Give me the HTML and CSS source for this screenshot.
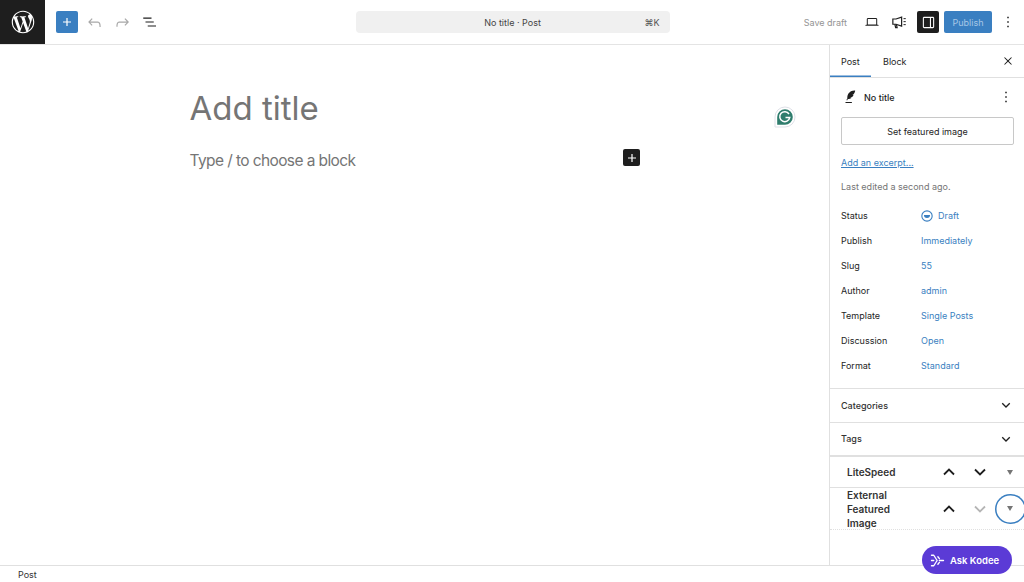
FILE: index.html
```html
<!DOCTYPE html>
<html lang="en">
<head>
<meta charset="utf-8">
<title>Add New Post</title>
<link rel="stylesheet" href="styles.css">
</head>
<body>
<div class="app">
  <header class="topbar">
    <div class="wp-logo">
      <svg width="26" height="26" viewBox="0 0 24 24" fill="#fff"><path d="M12 1.6C6.26 1.6 1.6 6.26 1.6 12S6.26 22.4 12 22.4 22.4 17.74 22.4 12 17.74 1.6 12 1.6zM2.65 12c0-1.36.29-2.64.81-3.8l4.46 12.22A9.35 9.35 0 0 1 2.65 12zm9.35 9.35c-.92 0-1.8-.13-2.64-.38l2.8-8.14 2.87 7.86.07.13c-.97.34-2 .53-3.1.53zm1.29-13.73c.56-.03 1.07-.09 1.07-.09.5-.06.44-.8-.06-.77 0 0-1.51.12-2.49.12-.92 0-2.46-.12-2.46-.12-.5-.03-.56.74-.06.77 0 0 .48.06.98.09l1.45 3.98-2.04 6.12-3.4-10.1c.56-.03 1.07-.09 1.07-.09.5-.06.44-.8-.06-.77 0 0-1.51.12-2.49.12l-.6-.01A9.34 9.34 0 0 1 12 2.65c2.44 0 4.66.93 6.33 2.46h-.12c-.92 0-1.57.8-1.57 1.66 0 .77.44 1.42.92 2.19.36.62.77 1.42.77 2.58 0 .8-.31 1.73-.71 3.03l-.94 3.13-3.39-10.08zm3.42 12.47 2.86-8.27c.53-1.34.71-2.41.71-3.36 0-.35-.02-.67-.07-.97A9.32 9.32 0 0 1 21.35 12a9.34 9.34 0 0 1-4.64 8.09z"/></svg>
    </div>
    <div class="tools">
      <button class="inserter"><svg width="14" height="14" viewBox="0 0 14 14"><path d="M7 3v8M3 7h8" stroke="#fff" stroke-width="1.2"/></svg></button>
      <svg class="tool-icon" width="19" height="19" viewBox="0 0 24 24" fill="#a8a8a8"><path d="M18.3 11.7c-.6-.6-1.4-.9-2.3-.9H6.7l2.9-3.3-1.1-1-4.5 5L8.5 16l1-1-2.7-2.7H16c.5 0 .9.2 1.3.5 1 1 1 3.4 1 4.5v.3h1.5v-.2c0-1.5 0-4.3-1.5-5.7z"/></svg>
      <svg class="tool-icon" width="19" height="19" viewBox="0 0 24 24" fill="#a8a8a8"><path d="M15.6 6.5l-1.1 1 2.9 3.3H8c-.9 0-1.7.3-2.3.9-1.4 1.5-1.4 4.2-1.4 5.6v.2h1.5v-.3c0-1.1 0-3.5 1-4.5.3-.3.7-.5 1.3-.5h9.2L14.500 15l1.100 1.100 4.600-4.600-4.600-5z"/></svg>
      <svg class="tool-icon" width="18" height="18" viewBox="0 0 24 24" fill="#1e1e1e"><path d="M3 6h11v1.500H3zM6 11.250h11v1.500H6zM9 16.500h11V18H9z"/></svg>
    </div>
    <div class="center">
      <div class="command">
        <span class="command-title">No title · Post</span>
        <span class="command-key">⌘K</span>
      </div>
    </div>
    <div class="actions">
      <span class="save">Save draft</span>
      <svg class="act-icon" width="16" height="18" viewBox="0 0 24 24" fill="#1e1e1e"><path d="M20.5 16h-.7V8c0-1.100-.9-2-2-2H6.200c-1.100 0-2 .9-2 2v8h-.7c-.8 0-1.500.7-1.500 1.500h20c0-.8-.7-1.500-1.500-1.500zM5.700 8c0-.3.2-.5.5-.5h11.600c.3 0 .5.2.5.5v7.600H5.700V8z"/></svg>
      <svg class="act-mega" width="18" height="18" viewBox="0 0 24 24" fill="none" stroke="#1e1e1e" stroke-width="1.600"><path d="M15.500 5.500v12L8 15H3.800V8H8z"/><path d="M6.500 15l1 4.500h2l-.8-3.700"/><path d="M18 7.500h3M18 11.500h3M18 15.500h3" stroke-width="1.300"/></svg>
      <button class="panel-toggle"><svg width="17" height="17" viewBox="0 0 24 24" fill="#fff"><path d="M18 4H6c-1.100 0-2 .9-2 2v12c0 1.100.9 2 2 2h12c1.100 0 2-.9 2-2V6c0-1.100-.9-2-2-2zM5.500 18V6c0-.3.2-.5.5-.5h8v13H6c-.3 0-.5-.2-.5-.5zm13 0c0 .3-.2.5-.5.5h-2.500v-13H18c.3 0 .5.2.5.5v12z"/></svg></button>
      <button class="publish">Publish</button>
      <svg class="more" width="18" height="18" viewBox="0 0 24 24" fill="#1e1e1e"><path d="M13 19h-2v-2h2v2zm0-6h-2v-2h2v2zm0-6h-2V5h2v2z"/></svg>
    </div>
  </header>

  <div class="workspace">
    <main class="editor">
      <div class="canvas">
        <h1 class="post-title">Add title</h1>
        <p class="placeholder">Type / to choose a block</p>
      </div>
      <button class="block-add"><svg width="14" height="14" viewBox="0 0 14 14"><path d="M7 3v8M3 7h8" stroke="#fff" stroke-width="1.200"/></svg></button>
      <svg class="grammarly" width="22" height="22" viewBox="0 0 22 22"><path d="M11 1a10 10 0 0 1 0 20H1V11A10 10 0 0 1 11 1z" fill="#fff" stroke="#dfe1e8"/><path d="M11 3.200a7.800 7.800 0 0 1 0 15.600H3.200V11A7.800 7.800 0 0 1 11 3.200z" fill="#2f7d6d"/><path d="M15 8a5 5 0 1 0 .7 3.600H11.500" fill="none" stroke="#fff" stroke-width="1.500"/></svg>
    </main>

    <aside class="sidebar">
      <div class="tabs">
        <span class="tab tab-active">Post</span>
        <span class="tab">Block</span>
        <svg class="close" width="16" height="16" viewBox="0 0 24 24" fill="#1e1e1e"><path d="M13.060 12l4.720-4.720-1.060-1.060L12 10.940 7.280 6.220 6.220 7.280 10.940 12l-4.720 4.720 1.060 1.060L12 13.060l4.720 4.720 1.060-1.060z"/></svg>
      </div>

      <section class="summary">
        <div class="summary-title">
          <svg width="18" height="18" viewBox="0 0 24 24" fill="#1e1e1e"><path d="M19 3.500c-3.400-.4-7.500 1.200-9.300 4.300-1.100 2-1.300 4.300-1.300 6.300l-1.200 2 .9.500 1.100-1.800c1.800 0 3.800-.6 5.200-1.800l-2.100-.3 3-1.200c.7-.7 1.200-1.500 1.500-2.400l-1.700-.2 2-1c.8-1.300 1.500-2.800 1.900-4.400zM6 18.500h8.500V20H6z"/></svg>
          <span class="summary-name">No title</span>
          <svg class="summary-more" width="18" height="18" viewBox="0 0 24 24" fill="#1e1e1e"><path d="M13 19h-2v-2h2v2zm0-6h-2v-2h2v2zm0-6h-2V5h2v2z"/></svg>
        </div>
        <button class="featured">Set featured image</button>
        <a class="excerpt" href="#">Add an excerpt...</a>
        <p class="edited">Last edited a second ago.</p>
        <dl class="fields">
          <div class="field"><dt>Status</dt><dd><svg width="12" height="12" viewBox="0 0 13 13" fill="none"><circle cx="6.500" cy="6.500" r="5.600" stroke="#3a7fc1" stroke-width="1.200"/><path d="M3.200 5.500h6.600a3.300 3.300 0 0 1-6.600 0z" fill="#3a7fc1"/></svg>Draft</dd></div>
          <div class="field"><dt>Publish</dt><dd>Immediately</dd></div>
          <div class="field"><dt>Slug</dt><dd>55</dd></div>
          <div class="field"><dt>Author</dt><dd>admin</dd></div>
          <div class="field"><dt>Template</dt><dd>Single Posts</dd></div>
          <div class="field"><dt>Discussion</dt><dd>Open</dd></div>
          <div class="field"><dt>Format</dt><dd>Standard</dd></div>
        </dl>
      </section>

      <div class="panel">
        <span>Categories</span>
        <svg width="20" height="20" viewBox="0 0 24 24" fill="none" stroke="#1e1e1e" stroke-width="1.600"><path d="M7.500 10L12 14.500l4.500-4.500"/></svg>
      </div>
      <div class="panel">
        <span>Tags</span>
        <svg width="20" height="20" viewBox="0 0 24 24" fill="none" stroke="#1e1e1e" stroke-width="1.600"><path d="M7.500 10L12 14.500l4.500-4.500"/></svg>
      </div>

      <div class="metabox metabox-first">
        <span class="metabox-name">LiteSpeed</span>
        <div class="metabox-btns">
          <span class="m-btn"><svg width="16" height="16" viewBox="0 0 16 16" fill="none" stroke="#1e1e1e" stroke-width="1.800"><path d="M3 10.500l5-5 5 5"/></svg></span>
          <span class="m-btn"><svg width="16" height="16" viewBox="0 0 16 16" fill="none" stroke="#1e1e1e" stroke-width="1.800"><path d="M3 5.500l5 5 5-5"/></svg></span>
          <span class="m-btn"><span class="caret"></span></span>
        </div>
      </div>
      <div class="metabox metabox-last">
        <span class="metabox-name">External Featured Image</span>
        <div class="metabox-btns">
          <span class="m-btn"><svg width="16" height="16" viewBox="0 0 16 16" fill="none" stroke="#1e1e1e" stroke-width="1.800"><path d="M3 10.500l5-5 5 5"/></svg></span>
          <span class="m-btn"><svg width="16" height="16" viewBox="0 0 16 16" fill="none" stroke="#b5b5b5" stroke-width="1.800"><path d="M3 5.500l5 5 5-5"/></svg></span>
          <span class="m-btn m-focus"><span class="caret"></span></span>
        </div>
      </div>
    </aside>
  </div>

  <footer class="statusbar">Post</footer>

  <button class="kodee">
    <svg width="15" height="15" viewBox="0 0 20 20" fill="none" stroke="#fff" stroke-width="1.800" stroke-linecap="round" stroke-linejoin="round"><path d="M2 3h3l4.500 7L5 17H2M2 10h3M10.500 5l2 2.500M10.500 15l2-2.500M12.500 10H18"/></svg>
    <span>Ask Kodee</span>
  </button>
</div>
</body>
</html>
```

FILE: styles.css
```css
* { box-sizing: border-box; }
html, body { margin: 0; height: 100%; overflow: hidden; }
body { font-family: Inter, "Liberation Sans", sans-serif; font-size: 9px; color: #1e1e1e; background: #fff; }
button { font-family: inherit; border: 0; padding: 0; }

.app { position: relative; display: flex; flex-direction: column; width: 1024px; height: 582px; }

.topbar { display: grid; grid-template-columns: 1fr 314px 1fr; align-items: center; height: 45px; flex: none; border-bottom: 1px solid #e4e4e4; position: relative; }
.wp-logo { position: absolute; left: 0; top: 0; width: 45px; height: 44px; background: #1e1e1e; display: flex; align-items: center; justify-content: center; }
.tools { display: flex; align-items: center; padding-left: 56px; gap: 9px; }
.inserter { width: 22px; height: 22px; border-radius: 2px; background: #3a7fc1; display: flex; align-items: center; justify-content: center; margin-right: -2px; }
.center { display: flex; justify-content: center; }
.command { flex: none; width: 314px; height: 22px; margin-left: 1px; background: #f0f0f0; border-radius: 4px; display: flex; align-items: center; justify-content: center; position: relative; color: #444; }
.command-key { position: absolute; right: 10px; color: #555; }
.actions { display: flex; align-items: center; justify-content: flex-end; padding-right: 7px; }
.save { color: #949494; margin-right: 17px; }
.act-icon { margin-right: 10px; }
.act-mega { margin-right: 9px; }
.panel-toggle { width: 22px; height: 22px; background: #1e1e1e; border-radius: 2px; display: flex; align-items: center; justify-content: center; }
.publish { width: 48px; height: 22px; background: #3a7fc1; color: #a7c7e6; border-radius: 2px; margin-left: 5px; font-size: 9px; }
.more { margin-left: 7px; }

.workspace { flex: 1; display: flex; min-height: 0; }
.editor { flex: 1; position: relative; }
.canvas { width: 450px; margin: 0 auto; padding-top: 42px; }
.post-title { margin: 0; font-size: 33px; line-height: 43px; font-weight: 400; color: #757575; }
.placeholder { margin: 21px 0 0; font-size: 15.500px; line-height: 20px; color: #757575; letter-spacing: -0.6px; }
.block-add { position: absolute; left: 623px; top: 104px; width: 17px; height: 17px; background: #1e1e1e; border-radius: 2px; display: flex; align-items: center; justify-content: center; }
.grammarly { position: absolute; left: 774px; top: 61px; }

.sidebar { width: 195px; flex: none; border-left: 1px solid #e0e0e0; overflow: hidden; }
.tabs { display: flex; align-items: stretch; height: 33px; border-bottom: 1px solid #e0e0e0; position: relative; }
.tab { display: flex; align-items: center; padding: 0 11px 0 12px; height: 32px; }
.tab-active { width: 41px; box-shadow: inset 0 -1.500px 0 #3a7fc1; padding-left: 11px; }
.close { position: absolute; right: 8px; top: 8px; }

.summary { padding: 7px 10px 10px 11px; border-bottom: 1px solid #e0e0e0; }
.summary-title { display: flex; align-items: center; height: 24px; margin-bottom: 8px; }
.summary-title > svg:first-child { margin-right: 5px; }
.summary-name { flex: 1; font-weight: 500; }
.summary-more { margin-right: -1px; }
.featured { display: block; width: 173px; height: 28px; background: #fff; border: 1px solid #c8c8c8; border-radius: 2px; color: #1e1e1e; font-size: 9px; }
.excerpt { display: block; margin-top: 11px; line-height: 13px; color: #3a7fc1; }
.edited { margin: 11px 0 0; line-height: 13px; color: #757575; }
.fields { margin: 10px 0 0; }
.field { display: flex; align-items: center; height: 25px; }
.field dt { width: 80px; color: #1e1e1e; }
.field dd { margin: 0; display: flex; align-items: center; gap: 5px; color: #3a7fc1; }

.panel { display: flex; align-items: center; justify-content: space-between; height: 33.500px; padding: 0 8px 0 11px; border-bottom: 1px solid #e0e0e0; font-weight: 500; color: #333; }
.metabox { display: flex; align-items: center; padding-left: 17px; font-weight: 600; font-size: 10px; line-height: 14px; }
.metabox-first { height: 32px; border-top: 1px solid #e0e0e0; border-bottom: 1px solid #e0e0e0; }
.metabox-last { height: 42px; border-bottom: 1px dotted #e0e0e0; }
.metabox-name { width: 87px; padding-right: 24px; flex: none; color: #333; }
.metabox-btns { display: flex; flex: none; }
.m-btn { width: 30.500px; height: 30px; display: flex; align-items: center; justify-content: center; border-radius: 50%; }
.m-focus { box-shadow: inset 0 0 0 1.500px #3a7fc1; }
.caret { width: 0; height: 0; border-left: 3px solid transparent; border-right: 3px solid transparent; border-top: 5px solid #757575; }

.statusbar { height: 17px; flex: none; border-top: 1px solid #e0e0e0; padding: 2px 0 0 18px; line-height: 14px; color: #333; }

.kodee { position: absolute; left: 922px; top: 546px; width: 90px; height: 28px; padding-left: 8px; border-radius: 14px; background: #5b3bd6; color: #fff; font-weight: 600; font-size: 9.500px; display: flex; align-items: center; justify-content: flex-start; gap: 5px; }
```
